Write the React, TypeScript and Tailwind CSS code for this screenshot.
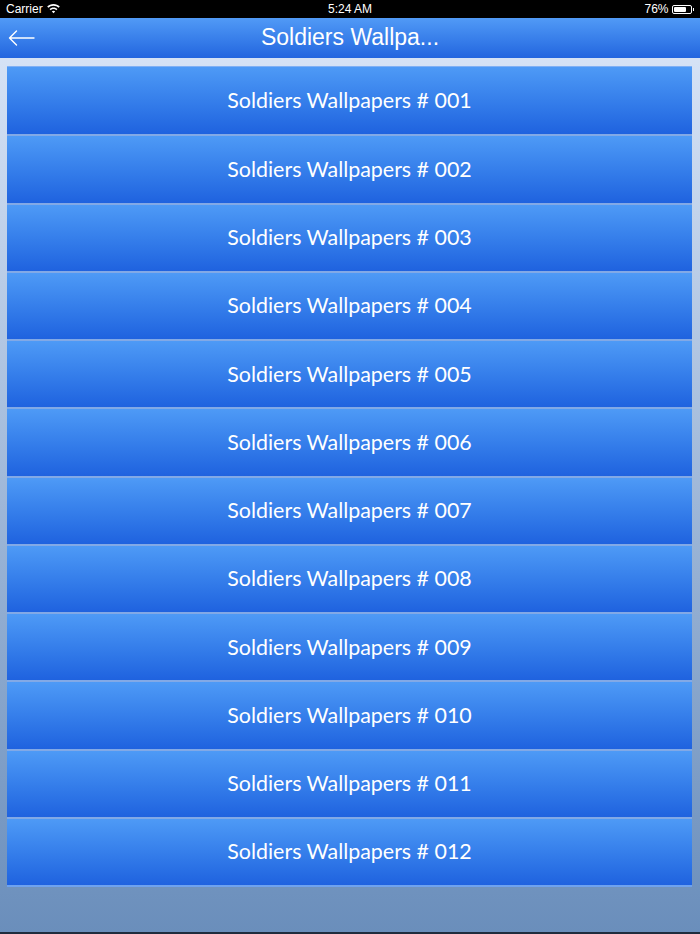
const items = Array.from({ length: 12 }, (_, i) => `Soldiers Wallpapers # ${String(i + 1).padStart(3, "0")}`);

function Wifi() {
  return (
    <svg width="13" height="10" viewBox="0 0 13 10" fill="white">
      <path d="M6.5 0C4 0 1.8 1 0.2 2.6l1.2 1.2C2.7 2.5 4.5 1.7 6.5 1.7s3.8.8 5.1 2.1l1.2-1.2C11.2 1 9 0 6.5 0z" />
      <path d="M6.5 3.4c-1.6 0-3 .6-4 1.6l1.2 1.2c.7-.7 1.7-1.1 2.8-1.1s2.1.4 2.8 1.1l1.2-1.2c-1-1-2.4-1.6-4-1.6z" />
      <path d="M6.5 6.8c-.7 0-1.3.3-1.7.7L6.5 9.3l1.7-1.8c-.4-.4-1-.7-1.7-.7z" />
    </svg>
  );
}

export default function App() {
  return (
    <div className="w-[700px] h-[934px] flex flex-col overflow-hidden bg-gradient-to-b from-[#dde8f9] to-[#6a8ebb]" style={{ fontFamily: "'Liberation Sans', Arial, sans-serif" }}>
      <div className="h-[18px] bg-black text-white text-[12px] flex items-center justify-between px-[6px] shrink-0">
        <div className="flex items-center gap-[4px] w-[120px]">
          <span>Carrier</span>
          <Wifi />
        </div>
        <span>5:24 AM</span>
        <div className="flex items-center justify-end gap-[3px] w-[120px]">
          <span>76%</span>
          <div className="flex items-center">
            <div className="w-[20px] h-[9px] border border-white rounded-[2px] p-[1px]">
              <div className="w-[76%] h-full bg-white rounded-[1px]" />
            </div>
            <div className="w-[1.5px] h-[3px] bg-white ml-[1px]" />
          </div>
        </div>
      </div>
      <div className="h-[40px] shrink-0 relative flex items-center justify-center bg-gradient-to-b from-[#519af6] to-[#2365df]">
        <svg className="absolute left-[8px] top-[12px]" width="27" height="16" viewBox="0 0 27 16" fill="none" stroke="white" strokeWidth="1.4" strokeLinecap="round" strokeLinejoin="round">
          <path d="M26 8H1.5M8.5 1L1.5 8l7 7" />
        </svg>
        <span className="text-white text-[23px] -mt-[1px]">Soldiers Wallpa...</span>
      </div>
      <div className="mt-[8px] ml-[7px] w-[685px] flex flex-col border-b-2 border-[#6ea2ef]">
        {items.map((t, i) => (
          <div
            key={t}
            className={`h-[68.25px] flex items-center justify-center text-white text-[21.4px] pb-[1px] bg-gradient-to-b from-[#4e9af6] to-[#1f62df] ${i > 0 ? "border-t-2 border-[#82a9e6]" : "border-t border-[#7fb0f5]"}`}
            style={{ fontFamily: "Lato, 'Open Sans', sans-serif" }}
          >
            {t}
          </div>
        ))}
      </div>
      <div className="flex-1" />
      <div className="h-[2px] bg-[#1f2c3d] shrink-0" />
    </div>
  );
}
